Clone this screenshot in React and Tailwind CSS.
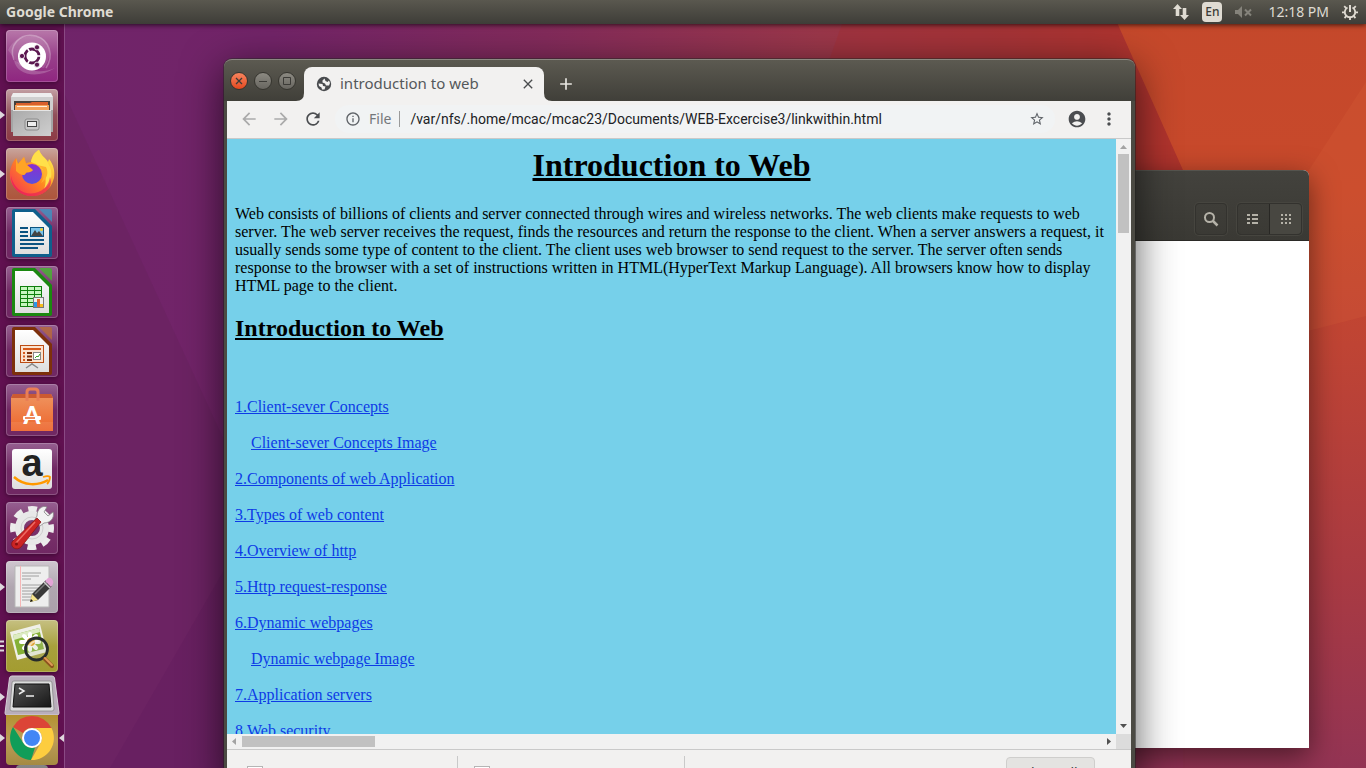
import React from "react";
import {
  MdAccountCircle,
  MdAdd,
  MdArrowBack,
  MdArrowForward,
  MdClose,
  MdInfoOutline,
  MdMoreVert,
  MdRefresh,
  MdStarBorder,
} from "react-icons/md";

function Wallpaper() {
  return (
    <svg className="absolute inset-0 h-full w-full" viewBox="0 0 1366 768" preserveAspectRatio="none" aria-hidden="true">
      <defs>
        <linearGradient id="wall" x1="0" y1="0" x2="1" y2="0">
          <stop offset="0" stopColor="#6f246a" />
          <stop offset="0.2" stopColor="#722468" />
          <stop offset="0.4" stopColor="#832b5b" />
          <stop offset="0.6" stopColor="#9b374a" />
          <stop offset="0.75" stopColor="#a63638" />
          <stop offset="0.85" stopColor="#b5372c" />
          <stop offset="1" stopColor="#c84a2b" />
        </linearGradient>
        <linearGradient id="low" x1="0" y1="0" x2="0" y2="1">
          <stop offset="0.35" stopColor="#943457" stopOpacity="0" />
          <stop offset="1" stopColor="#943457" />
        </linearGradient>
        <linearGradient id="orange" x1="0" y1="0" x2="0" y2="1">
          <stop offset="0" stopColor="#c4482b" />
          <stop offset="0.25" stopColor="#c8492b" />
          <stop offset="0.45" stopColor="#bf4434" />
          <stop offset="0.75" stopColor="#a93a42" />
          <stop offset="1" stopColor="#933454" />
        </linearGradient>
      </defs>
      <rect width="1366" height="768" fill="url(#wall)" />
      <path d="M842 24H1118L1183 170H790z" fill="#a62d30" opacity=".35" />
      <rect x="500" width="866" height="768" fill="url(#low)" />
      <path d="M1107 0H1366V768H1183V170z" fill="url(#orange)" />
      <path d="M1366 82L1300 184V333L1366 316z" fill="#dc6a3c" opacity=".18" />
      <path d="M65 95L224 440V570L110 768H65z" fill="#68215e" opacity=".5" />
      <path d="M224 570L110 768H224z" fill="#5c1c56" opacity=".4" />
    </svg>
  );
}

function UbuntuIcon() {
  return (
    <>
      <path d="M8 30C2 16 14 2 30 6C44 10 48 26 40 38" fill="none" stroke="#fff" strokeOpacity=".3" strokeWidth="1.500" />
      <path d="M2 20C8 6 28 2 38 10C46 18 44 30 38 38L14 36z" fill="#fff" opacity=".14" />
      <path d="M8 30C10 44 30 50 49 38C40 42 32 42 26 40z" fill="#fff" opacity=".2" />
      <circle cx="26" cy="26.500" r="14" fill="#fff" />
      <circle cx="26" cy="26" r="7" fill="none" stroke="#5b1750" strokeWidth="2.800" />
      <path d="M26 26L37 26M26 26L20.500 16.500M26 26L20.500 35.500" stroke="#fff" strokeWidth="1.500" />
      <circle cx="26" cy="26" r="5" fill="#fff" />
      <g fill="#5b1750" stroke="#fff" strokeWidth=".8">
        <circle cx="16" cy="26" r="2.600" />
        <circle cx="31" cy="17.300" r="2.600" />
        <circle cx="31" cy="34.700" r="2.600" />
      </g>
    </>
  );
}

function FilesIcon() {
  return (
    <>
      <path d="M7 4H45L47 10V43H5V10z" fill="#a5a5a5" />
      <path d="M7 4H45L47 8H5z" fill="#eee" />
      <path d="M5 8H47V21H5z" fill="#cfcfcf" />
      <path d="M8 12H44V23H8z" fill="#45403c" />
      <path d="M10 14H24L26 13H42V23H10z" fill="#d95f2b" />
      <path d="M9 16H43V23H9z" fill="#f3a25a" />
      <path d="M11 17.500H41" stroke="#fff0df" />
      <path d="M7 21H45V47H7z" fill="url(#metal)" />
      <path d="M7 21.500H45" stroke="#e5e5e5" />
      <rect x="19" y="30" width="14" height="11" rx="2" fill="#c9c9c9" stroke="#8b8b8b" />
      <rect x="21.500" y="32.500" width="9" height="5" fill="#eee" stroke="#444" />
    </>
  );
}

function FirefoxIcon() {
  return (
    <>
      <path d="M4 30C3 22 6 15 10 10L12 16L18 9L20 15L25 14C26 8 29 4 33 2C35 8 40 10 42 14L43 11C48 17 49 24 48 30C45 42 36 48 26 48C14 48 6 40 4 30z" fill="url(#fox)" />
      <path d="M33 2C35 8 40 10 42 15C48 24 46 36 38 41C42 32 39 20 30 16L25 14C26 8 29 4 33 2z" fill="#ffe04a" />
      <circle cx="26" cy="26" r="10" fill="url(#globe)" />
      <path d="M10 10L12 16L18 9L20 16C22 18 25 20 27 22C25 25 21 24 20 25C19 28 15 28 10 23z" fill="#ffa425" />
      <path d="M5 28C8 42 19 47 29 45C38 43 43 36 44 29C48 40 38 48 26 48C14 48 5 40 5 28z" fill="#e6155e" opacity=".6" />
      <path d="M31 17C38 19 40 28 35 35C41 31 43 25 40 19z" fill="#ffb02c" />
    </>
  );
}

function DocIcon({ dark, light, children }) {
  return (
    <>
      <path d="M8 2H29L46 19V48Q46 50 44 50H8Q6 50 6 48V4Q6 2 8 2z" fill={dark} />
      <path d="M33 2H44Q46 2 46 4V15z" fill={light} opacity=".8" />
      <path d="M9 5H27L43 21V47H9z" fill="url(#paper)" />
      {children}
    </>
  );
}

function WriterIcon() {
  return (
    <DocIcon dark="#0f5f8c" light="#3d92c2">
      <path d="M14 21H22M14 25H22M14 29H22M14 33H38M14 37H38M14 41H32" stroke="#0b5381" strokeWidth="2" />
      <rect x="24.500" y="20.500" width="13" height="9" fill="#7cc4ea" stroke="#0b5381" />
      <path d="M25 29L29 23L31 26L33 24L37 29z" fill="#444" />
      <circle cx="35.500" cy="22.500" r="1.500" fill="#f4cf31" />
    </DocIcon>
  );
}

function CalcIcon() {
  return (
    <DocIcon dark="#1b8810" light="#43b52d">
      <path d="M14 20H36V41H14z" fill="#0f7f0c" />
      <g fill="#c7f6bf">
        {[21, 25, 29, 33, 37].map((y) => (
          <path key={y} d={`M15 ${y}h6v3h-6zM22 ${y}h6v3h-6zM29 ${y}h6v3h-6z`} />
        ))}
      </g>
      <rect x="27.500" y="31.500" width="10" height="10" fill="#eee" stroke="#777" />
      <path d="M28 36h3v5h-3z" fill="#2c97e8" />
      <path d="M31 33h3v8h-3z" fill="#e3662b" />
      <path d="M34 38h3v3h-3z" fill="#f5bd1d" />
    </DocIcon>
  );
}

function ImpressIcon() {
  return (
    <DocIcon dark="#7d300b" light="#b96a3a">
      <path d="M26 37V40M20 43L26 39L32 43" fill="none" stroke="#888" strokeWidth="1.500" />
      <rect x="14.500" y="20.500" width="23" height="17" fill="#fbe3cf" stroke="#bb4c14" />
      <path d="M17 24H35" stroke="#d7591a" strokeWidth="2" />
      <path d="M17 28H19M17 31.500H19M17 35H19" stroke="#d7591a" strokeWidth="2" />
      <path d="M21 28H26M21 31.500H26M21 35H26" stroke="#7d300b" strokeWidth="2" />
      <rect x="27.500" y="27.500" width="7" height="7" fill="#fff" stroke="#888" />
      <path d="M29 33L31 31L32 32L34 29" fill="none" stroke="#38a326" />
    </DocIcon>
  );
}

function SoftwareIcon() {
  return (
    <>
      <path d="M5 14L7 10H45L47 14V47H5z" fill="url(#bag)" />
      <path d="M5 14L7 10H45L47 14z" fill="#cc5a31" />
      <path d="M21 17V8Q21 5 24 5H29Q32 5 32 8V17" fill="none" stroke="#e97e56" strokeWidth="3" />
      <path d="M5 38H47V47H5z" fill="#fff" opacity=".08" />
      <text x="26" y="40" textAnchor="middle" fontFamily="Lato, sans-serif" fontWeight="900" fontSize="24" fill="#fff">A</text>
      <rect x="17" y="32" width="18" height="4" rx="1" fill="#fff" />
      <path d="M19 34H29" stroke="#e9642d" strokeWidth="1.500" />
    </>
  );
}

function AmazonIcon() {
  return (
    <>
      <rect x="6" y="6" width="40" height="40" rx="3" fill="url(#paper)" />
      <text x="26" y="33" textAnchor="middle" fontFamily="Liberation Sans, sans-serif" fontWeight="700" fontSize="38" fill="#222">a</text>
      <path d="M8 34C18 43 32 43 42 37" fill="none" stroke="#f90" strokeWidth="2.500" />
      <path d="M37 34C40 33 43 33 44 34C44 36 43 39 41 41" fill="none" stroke="#f90" strokeWidth="1.800" />
    </>
  );
}

function SettingsIcon() {
  return (
    <>
      <circle cx="26" cy="26" r="18.500" fill="none" stroke="#ececec" strokeWidth="7" strokeDasharray="8.500 6.030" strokeDashoffset="4.250" />
      <circle cx="26" cy="26" r="12.500" fill="none" stroke="#e8e8e8" strokeWidth="9" />
      <circle cx="26" cy="26" r="11" fill="none" stroke="#cfcfcf" strokeWidth="1" />
      <path d="M28 19L31 14C31 7 36 3 41 5L38 10L42 14L47 10C49 16 44 21 38 21L34 24z" fill="#f2f2f2" stroke="#888" strokeWidth=".8" />
      <path d="M31 16L35 20L15 45C11 49 4 46 6 40z" fill="#cc2424" stroke="#8c1515" strokeWidth=".8" />
      <path d="M29 20L10 41" stroke="#ee6d64" strokeWidth="1.500" />
      <circle cx="10.500" cy="42" r="1.500" fill="#861010" />
    </>
  );
}

function EditorIcon() {
  return (
    <>
      <path d="M9 5H43V46H9z" fill="#eee" stroke="#b7b7b7" />
      <path d="M14.500 5V46" stroke="#f5b6b6" />
      <path d="M16 12H35M16 15H33M16 18H25M16 24H35M16 27H34M16 30H30M16 33H29M16 36H25M16 39H24" stroke="#8b8b8b" strokeWidth=".8" />
      <path d="M24 41L26 33L40 19L46 25L32 39z" fill="#383838" />
      <path d="M24 41L26 33L32 39z" fill="#f4e28a" />
      <path d="M24 41L25 38L27 40z" fill="#111" />
      <path d="M29 33L42 20" stroke="#777" strokeWidth="1.500" />
      <path d="M39 20L42 17Q44 16 46 18L47 20Q48 22 45 26z" fill="#e3a4d6" />
      <path d="M38 21L44 27" stroke="#ccc" strokeWidth="1.500" />
    </>
  );
}

function ViewerIcon() {
  return (
    <>
      <path d="M4 12L34 4L41 32L11 40z" fill="#f0f0e8" />
      <path d="M7 15L33 8L38 29L12 35z" fill="#85b136" />
      <path d="M7 15L33 8L34 12L8 20z" fill="#ddebc2" />
      <g stroke="#fff" strokeWidth="4" strokeLinecap="round">
        <path d="M15 22H33M24 14V30M18 16L30 28M30 16L18 28" />
      </g>
      <circle cx="25" cy="22" r="4" fill="#ee9b1c" />
      <circle cx="30.500" cy="29" r="11" fill="#b9c59a" opacity=".25" />
      <circle cx="30.500" cy="29" r="11" fill="none" stroke="#262b2b" strokeWidth="2.800" />
      <path d="M23 27Q25 21 32 21" stroke="#fff" strokeWidth="2" fill="none" opacity=".6" />
      <path d="M39 39L46 46" stroke="#8d521e" strokeWidth="4" strokeLinecap="round" />
      <path d="M39 38L46 45" stroke="#dd9b56" strokeWidth="2" strokeLinecap="round" />
    </>
  );
}

function ChromeIcon() {
  return (
    <>
      <path d="M26 1A22 22 0 0 1 45.500 13H26A10 10 0 0 0 17 18L7 12A22 22 0 0 1 26 1z" fill="#dc4437" />
      <path d="M7 12L17.300 28A10 10 0 0 0 29 32.500L25 45A22 22 0 0 1 7 12z" fill="#109d59" />
      <path d="M45.500 13A22 22 0 0 1 25 45L34.700 28A10 10 0 0 0 26 13z" fill="#fdcd3f" />
      <circle cx="26" cy="23" r="10" fill="#fff" />
      <circle cx="26" cy="23" r="8" fill="#4386f5" />
    </>
  );
}

const launchers = [
  { name: "Search your computer", tile: "from-[#b878aa] via-[#98408a] to-[#8f2580]", Icon: UbuntuIcon },
  { name: "Files", tile: "from-[#c3a0a4] via-[#90505a] to-[#8d3a44]", Icon: FilesIcon, mark: "arrow" },
  { name: "Firefox Web Browser", tile: "from-[#c9a59d] via-[#b2674f] to-[#ad553c]", Icon: FirefoxIcon, mark: "arrow" },
  { name: "LibreOffice Writer", tile: "from-[#966091] via-[#702863] to-[#702863]", Icon: WriterIcon },
  { name: "LibreOffice Calc", tile: "from-[#966091] via-[#702863] to-[#702863]", Icon: CalcIcon },
  { name: "LibreOffice Impress", tile: "from-[#966091] via-[#702863] to-[#702863]", Icon: ImpressIcon },
  { name: "Ubuntu Software", tile: "from-[#966091] via-[#702863] to-[#702863]", Icon: SoftwareIcon },
  { name: "Amazon", tile: "from-[#966091] via-[#702863] to-[#702863]", Icon: AmazonIcon },
  { name: "System Settings", tile: "from-[#966091] via-[#7a326b] to-[#702863]", Icon: SettingsIcon },
  { name: "Text Editor", tile: "from-[#cfc6cf] via-[#b0a6b0] to-[#aaa0aa]", Icon: EditorIcon, mark: "arrow" },
  { name: "Image Viewer", tile: "from-[#c6c081] via-[#a7a03c] to-[#a39c30]", Icon: ViewerIcon, mark: "lines" },
];

function Mark({ kind }) {
  if (kind === "lines") {
    return (
      <svg className="absolute top-5 -left-1.5 h-3 w-1" viewBox="0 0 4 12" aria-hidden="true">
        <path d="M0 1.500H4M0 6H4M0 10.500H4" stroke="#ded8dd" strokeWidth="2" />
      </svg>
    );
  }
  return (
    <svg className="absolute top-5 -left-1.5 h-3 w-[5px]" viewBox="0 0 5 12" aria-hidden="true">
      <path d="M0 2L5 6L0 10z" fill="#ded8dd" />
    </svg>
  );
}

function Launcher() {
  return (
    <nav aria-label="Launcher" className="relative flex w-[65px] shrink-0 flex-col overflow-hidden border-r border-[#8a4a84] bg-[#5f104f]/90 pt-1.5">
      <svg className="absolute h-0 w-0" aria-hidden="true">
        <defs>
          <linearGradient id="metal" x1="0" y1="0" x2="1" y2="1">
            <stop offset="0" stopColor="#aaa" />
            <stop offset="1" stopColor="#cfcfcf" />
          </linearGradient>
          <linearGradient id="paper" x1="0" y1="0" x2="0" y2="1">
            <stop offset="0" stopColor="#fff" />
            <stop offset="1" stopColor="#dedede" />
          </linearGradient>
          <linearGradient id="bag" x1="0" y1="0" x2="0" y2="1">
            <stop offset="0" stopColor="#ef9560" />
            <stop offset="1" stopColor="#ed652c" />
          </linearGradient>
          <linearGradient id="fox" x1="1" y1="0" x2="0" y2="1">
            <stop offset="0.1" stopColor="#fff04b" />
            <stop offset="0.5" stopColor="#ff8a1f" />
            <stop offset="1" stopColor="#f5265c" />
          </linearGradient>
          <linearGradient id="globe" x1="0" y1="0" x2="0" y2="1">
            <stop offset="0" stopColor="#8a2fd0" />
            <stop offset="1" stopColor="#5a50dd" />
          </linearGradient>
          <linearGradient id="screen" x1="0" y1="0" x2="1" y2="1">
            <stop offset="0" stopColor="#555" />
            <stop offset="1" stopColor="#161616" />
          </linearGradient>
        </defs>
      </svg>
      <div className="flex flex-col items-center gap-[7px]">
        {launchers.map(({ name, tile, Icon, mark }) => (
          <button key={name} type="button" aria-label={name} className={`relative h-[52px] w-[52px] shrink-0 rounded bg-linear-to-b shadow-[0_1px_5px_rgba(30,0,25,0.6),inset_0_0_0_1px_rgba(255,255,255,0.2)] ${tile}`}>
            {mark && <Mark kind={mark} />}
            <svg className="block h-[52px] w-[52px]" viewBox="0 0 52 52" aria-hidden="true">
              <Icon />
            </svg>
          </button>
        ))}
      </div>
      <button type="button" aria-label="Terminal" className="relative z-10 mx-auto mt-[3px] h-10 w-14 shrink-0">
        <svg className="absolute top-4 -left-1 h-3 w-[5px]" viewBox="0 0 5 12" aria-hidden="true">
          <path d="M0 2L5 6L0 10z" fill="#ded8dd" />
        </svg>
        <svg className="block h-10 w-14" viewBox="0 0 56 40" aria-hidden="true">
          <path d="M8 1H48Q50 1 50.500 3L55 38Q55 40 53 40H3Q1 40 1 38L5.500 3Q6 1 8 1z" fill="#b9aebb" stroke="#d6ced7" />
          <path d="M10 6H46Q48 6 48 8L50 34Q50 36 48 36H8Q6 36 6 34L8 8Q8 6 10 6z" fill="#dcdcdc" stroke="#888" strokeWidth=".8" />
          <path d="M11 9H45L47 32H9z" fill="url(#screen)" stroke="#111" />
          <path d="M15 13L20 16L15 19M22 21H30" fill="none" stroke="#eee" strokeWidth="1.500" />
        </svg>
      </button>
      <button type="button" aria-label="Google Chrome" className="relative mx-auto h-[50px] w-[52px] shrink-0 rounded-b bg-linear-to-b from-[#b3922f] via-[#bd9d57] to-[#a58a42] shadow-md">
        <svg className="absolute top-[17px] -left-1.5 h-3 w-[5px]" viewBox="0 0 5 12" aria-hidden="true">
          <path d="M0 2L5 6L0 10z" fill="#ded8dd" />
        </svg>
        <svg className="absolute top-[17px] -right-1.5 h-3 w-[5px]" viewBox="0 0 5 12" aria-hidden="true">
          <path d="M5 2L0 6L5 10z" fill="#ded8dd" />
        </svg>
        <svg className="block h-[50px] w-[52px]" viewBox="0 0 52 50" aria-hidden="true">
          <ChromeIcon />
        </svg>
      </button>
      <div className="mx-auto h-4 w-8 shrink-0 rounded-t bg-linear-to-b from-[#999] to-[#555]" />
    </nav>
  );
}

function TopPanel() {
  return (
    <header className="relative z-30 flex h-6 shrink-0 items-center justify-between bg-linear-to-b from-[#5a584f] to-[#3e3d38] pr-[7px] pl-1.5 font-['Noto_Sans',sans-serif] text-sm text-[#dfdbd2] shadow-[0_1px_5px_rgba(0,0,0,0.7)]">
      <span className="text-[14px] leading-6 font-bold">Google Chrome</span>
      <div className="flex items-center">
        <button type="button" aria-label="Network" className="mr-3">
          <svg className="block h-[18px] w-[18px]" viewBox="0 0 18 18" aria-hidden="true">
            <path d="M5.500 1L10 6H7.300V13H3.700V6H1zM12.500 17L8 12H10.700V5H14.300V12H17z" fill="#dfdbd2" />
          </svg>
        </button>
        <button type="button" aria-label="Input language" className="mr-3 h-5 w-5 rounded-sm bg-[#dfdbd2] text-xs leading-5 font-medium text-[#3c3b37]">En</button>
        <button type="button" aria-label="Sound muted" className="mr-4">
          <svg className="block h-4 w-[18px]" viewBox="0 0 18 16" aria-hidden="true">
            <path d="M1 6H4L8 2V14L4 10H1z" fill="#85837b" />
            <path d="M11 5.500L17 11.500M17 5.500L11 11.500" stroke="#85837b" strokeWidth="2" />
          </svg>
        </button>
        <time className="mr-3 leading-6">12:18 PM</time>
        <button type="button" aria-label="System menu">
          <svg className="block h-[18px] w-[18px]" viewBox="0 0 18 18" fill="none" stroke="#dfdbd2" aria-hidden="true">
            <path d="M6.500 4.500A5.200 5.200 0 1 0 11.500 4.500" strokeWidth="1.800" />
            <path d="M9 2V9" strokeWidth="2" />
            <path d="M3.200 3.200L5.200 5.200M14.800 3.200L12.800 5.200M1 9.300H3.800M14.200 9.300H17M3.500 15L5.300 13.200M14.500 15L12.700 13.200M9 14.500V17" strokeWidth="1.800" />
          </svg>
        </button>
      </div>
    </header>
  );
}

function FilesWindow() {
  return (
    <section aria-label="Files" className="absolute top-[146px] right-[57px] bottom-5 flex w-[400px] flex-col overflow-hidden rounded-t-md bg-white shadow-[0_8px_28px_rgba(0,0,0,0.5)]">
      <div className="flex h-[71px] shrink-0 items-end justify-end gap-2.5 border-t border-b border-t-[#55544e] border-b-[#2b2a27] bg-linear-to-b from-[#43423d] to-[#3a3934] px-[7px] pb-[5px]">
        <button type="button" aria-label="Search" className="flex h-8 w-8 items-center justify-center rounded border border-[#33322e] shadow-[0_0_0_1px_#46453f]">
          <svg className="h-4 w-4" viewBox="0 0 16 16" fill="none" stroke="#b5b2a8" aria-hidden="true">
            <circle cx="6.500" cy="6.500" r="4.500" strokeWidth="2" />
            <path d="M10 10L14.500 14.500" strokeWidth="2.500" />
          </svg>
        </button>
        <div className="flex h-8 w-[65px] rounded border border-[#33322e] shadow-[0_0_0_1px_#46453f]">
          <button type="button" aria-label="List view" className="flex flex-1 items-center justify-center pr-1">
            <svg className="h-4 w-4" viewBox="0 0 16 16" fill="#b5b2a8" aria-hidden="true">
              <path d="M3 3h3v2H3zM8 3h6v2H8zM3 7h3v2H3zM8 7h6v2H8zM3 11h3v2H3zM8 11h6v2H8z" />
            </svg>
          </button>
          <button type="button" aria-label="Grid view" className="flex w-8 items-center justify-center rounded-r border-l border-[#282724] bg-[#484741]">
            <svg className="h-4 w-4" viewBox="0 0 16 16" fill="#b5b2a8" aria-hidden="true">
              <path d="M3 3h2v2H3zM7 3h2v2H7zM11 3h2v2h-2zM3 7h2v2H3zM7 7h2v2H7zM11 7h2v2h-2zM3 11h2v2H3zM7 11h2v2H7zM11 11h2v2h-2z" />
            </svg>
          </button>
        </div>
      </div>
    </section>
  );
}

function WindowButton({ label, color, children }) {
  return (
    <button type="button" aria-label={label} className={`h-[18px] w-[18px] rounded-full border border-[#36352f] bg-linear-to-b ${color}`}>
      <svg className="block h-4 w-4" viewBox="0 0 16 16" fill="none" stroke="#3c3b37" aria-hidden="true">
        {children}
      </svg>
    </button>
  );
}

function TitleBar() {
  return (
    <div className="flex h-[41px] shrink-0 items-end">
      <div className="mr-2 flex items-center gap-1.5 self-center pl-[3px]">
        <WindowButton label="Close" color="from-[#f7845d] to-[#e3471b]">
          <path d="M5 5L11 11M11 5L5 11" strokeWidth="1.300" />
        </WindowButton>
        <WindowButton label="Minimize" color="from-[#8c8a82] to-[#686660]">
          <path d="M4 8.500H12" />
        </WindowButton>
        <WindowButton label="Maximize" color="from-[#8c8a82] to-[#686660]">
          <path d="M4.500 4.500H11.500V11.500H4.500z" />
        </WindowButton>
      </div>
      <div className="relative flex h-[34px] w-60 items-center rounded-t-lg bg-[#f2f1f0] pr-2 pb-px pl-3">
        <svg className="absolute bottom-0 -left-2 h-2 w-2" viewBox="0 0 8 8" fill="#f2f1f0" aria-hidden="true">
          <path d="M8 0V8H0Q8 8 8 0z" />
        </svg>
        <svg className="absolute -right-2 bottom-0 h-2 w-2" viewBox="0 0 8 8" fill="#f2f1f0" aria-hidden="true">
          <path d="M0 0V8H8Q0 8 0 0z" />
        </svg>
        <svg className="mr-2 h-4 w-4" viewBox="0 0 16 16" aria-hidden="true">
          <circle cx="8" cy="8" r="7.200" fill="#494b4e" />
          <path d="M8.500 2.500L6.500 4.500V6.500L9 7.500L10 9.500L13 9.500L14 7L13 4.500L11.500 6L9.500 5z" fill="#f2f1f0" />
          <path d="M2.500 7.500L6.500 8L7 10L9.500 10.500L8.500 13.500L6 13.500L5.500 11.500L3 10z" fill="#f2f1f0" />
        </svg>
        <span className="flex-1 text-[15px] text-[#55585b]">introduction to web</span>
        <button type="button" aria-label="Close tab">
          <MdClose className="h-4 w-4 text-[#4a4c4e]" />
        </button>
      </div>
      <button type="button" aria-label="New tab" className="flex h-[34px] items-center pl-3">
        <MdAdd className="h-5 w-5 text-[#e8e6e1]" />
      </button>
    </div>
  );
}

function Toolbar() {
  return (
    <div className="flex h-[38px] shrink-0 items-center border-b border-[#c9c9c9] bg-[#f2f1f0] px-3 pb-px text-[#4b4d50]">
      <button type="button" aria-label="Back"><MdArrowBack className="h-5 w-5 text-[#aaa]" /></button>
      <button type="button" aria-label="Forward" className="ml-3"><MdArrowForward className="h-5 w-5 text-[#aaa]" /></button>
      <button type="button" aria-label="Reload" className="ml-3"><MdRefresh className="h-5 w-5" /></button>
      <div className="ml-3 flex h-7 flex-1 items-center rounded-full bg-[#f1f3f4] pr-2.5 pl-2.5">
        <MdInfoOutline className="h-4 w-4 text-[#5f6368]" />
        <label htmlFor="address" className="ml-2 border-r border-[#9a9a9a] pr-2 text-[14px] leading-4 text-[#74777b]">File</label>
        <input
          id="address"
          type="text"
          defaultValue="/var/nfs/.home/mcac/mcac23/Documents/WEB-Excercise3/linkwithin.html"
          className="ml-2.5 min-w-0 flex-1 bg-transparent font-['Roboto','Noto_Sans',sans-serif] text-[14px] text-[#202124] outline-none"
        />
        <button type="button" aria-label="Bookmark this page"><MdStarBorder className="h-4 w-4 text-[#5f6368]" /></button>
      </div>
      <button type="button" aria-label="Profile" className="ml-3"><MdAccountCircle className="h-5 w-5" /></button>
      <button type="button" aria-label="Menu" className="ml-3"><MdMoreVert className="h-5 w-5" /></button>
    </div>
  );
}

const links = [
  { text: "1.Client-sever Concepts" },
  { text: "Client-sever Concepts Image", nested: true },
  { text: "2.Components of web Application" },
  { text: "3.Types of web content" },
  { text: "4.Overview of http" },
  { text: "5.Http request-response" },
  { text: "6.Dynamic webpages" },
  { text: "Dynamic webpage Image", nested: true },
  { text: "7.Application servers" },
  { text: "8.Web security" },
];

function WebPage() {
  return (
    <main className="min-w-0 flex-1 overflow-hidden bg-[#76d0ea] p-2 font-['Liberation_Serif',serif] text-base leading-[18px] text-black">
      <h1 className="mb-[21px] text-center text-[32px] leading-[37px] font-bold underline">Introduction to Web</h1>
      <p className="mb-5">
        Web consists of billions of clients and server connected through wires and wireless networks. The web clients make requests to web server. The web server receives the request, finds the resources and return the response to the client. When a server answers a request, it usually sends some type of content to the client. The client uses web browser to send request to the server. The server often sends response to the browser with a set of instructions written in HTML(HyperText Markup Language). All browsers know how to display HTML page to the client.
      </p>
      <h2 className="mb-14 text-2xl leading-[27px] font-bold underline">Introduction to Web</h2>
      <ul className="flex flex-col gap-[18px]">
        {links.map(({ text, nested }) => (
          <li key={text} className={nested ? "pl-4" : ""}>
            <a href={`#${text}`} className="text-[#0d3be6] underline">{text}</a>
          </li>
        ))}
      </ul>
    </main>
  );
}

function BrowserWindow() {
  return (
    <section aria-label="Google Chrome" className="absolute top-[35px] right-[231px] -bottom-5 left-[159px] z-10 flex flex-col rounded-t-lg border-t border-[#8a8880] bg-[#4b4a43] bg-linear-to-b from-[#5c5a51] to-[#403f39] bg-[length:100%_41px] bg-no-repeat pr-1 pl-[3px] font-['Noto_Sans',sans-serif] shadow-[0_10px_42px_rgba(0,0,0,0.65),0_0_0_1px_rgba(50,49,45,0.5)]">
      <TitleBar />
      <Toolbar />
      <div className="flex min-h-0 flex-1">
        <WebPage />
        <div className="flex w-[15px] shrink-0 flex-col items-center bg-[#f1f1f1]" aria-hidden="true">
          <svg className="h-[15px] w-[15px]" viewBox="0 0 15 15"><path d="M4 10H11L7.500 6z" fill="#a3a3a3" /></svg>
          <div className="h-[79px] w-[11px] bg-[#c1c1c1]" />
          <div className="flex-1" />
          <svg className="h-[15px] w-[15px]" viewBox="0 0 15 15"><path d="M4 5H11L7.500 9z" fill="#505050" /></svg>
        </div>
      </div>
      <div className="flex h-[15px] shrink-0 items-center bg-[#f1f1f1]" aria-hidden="true">
        <svg className="h-[15px] w-[15px]" viewBox="0 0 15 15"><path d="M9 4V11L5 7.500z" fill="#a3a3a3" /></svg>
        <div className="h-[11px] w-[133px] bg-[#c1c1c1]" />
        <div className="flex-1" />
        <svg className="h-[15px] w-[15px]" viewBox="0 0 15 15"><path d="M6 4V11L10 7.500z" fill="#505050" /></svg>
        <div className="h-[15px] w-[15px] bg-[#dcdcdc]" />
      </div>
      <footer className="flex h-[39px] shrink-0 items-start border-t border-[#c9c9c9] bg-[#f2f1f0] pt-1.5">
        {["first", "second"].map((item) => (
          <div key={item} className="flex h-8 w-[227px] items-start border-r border-[#c9c9c9] pt-2.5 pl-4 first:w-[231px] first:pl-5">
            <div className="h-5 w-4 border border-[#b5b5b5] bg-white" />
          </div>
        ))}
        <button type="button" className="mt-px mr-9 ml-auto h-[31px] w-[89px] rounded border border-[#cfcecc] bg-[#e4e3e1] text-[14px] text-[#3c4043]">Show all</button>
      </footer>
    </section>
  );
}

export default function App() {
  return (
    <div className="relative flex h-screen flex-col overflow-hidden bg-[#70246a]">
      <Wallpaper />
      <TopPanel />
      <div className="relative flex min-h-0 flex-1">
        <Launcher />
        <div className="relative min-w-0 flex-1">
          <FilesWindow />
          <BrowserWindow />
        </div>
      </div>
    </div>
  );
}
